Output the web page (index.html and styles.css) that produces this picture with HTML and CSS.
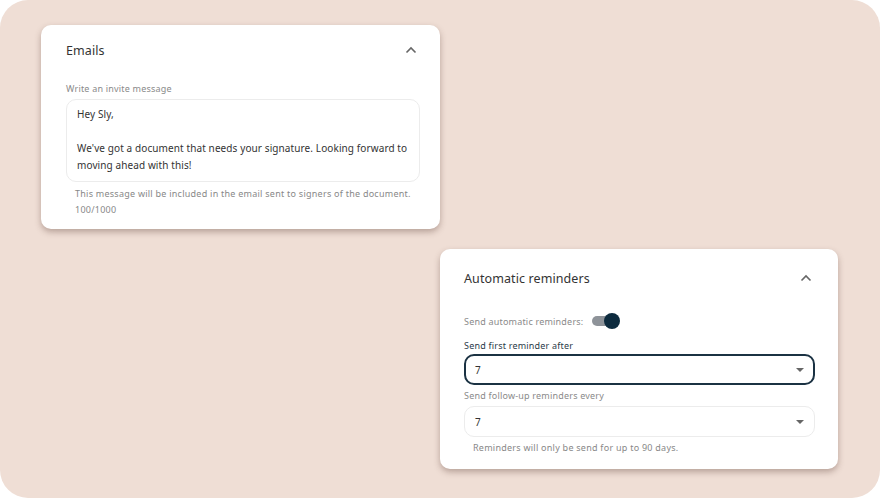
FILE: index.html
```html
<!DOCTYPE html>
<html lang="en">
<head>
    <meta charset="UTF-8">
    <meta name="viewport" content="width=device-width, initial-scale=1.0">
    <title>Signing settings</title>
    <link rel="stylesheet" href="styles.css">
</head>
<body>
    <div class="canvas">
        <div class="row row-top">
            <section class="card card-emails">
                <header class="card-head">
                    <h2>Emails</h2>
                    <svg class="chevron" width="12" height="8" viewBox="0 0 12 8"><path d="M1.5 6.5 L6 2 L10.5 6.5" fill="none" stroke="#666" stroke-width="1.6"/></svg>
                </header>
                <label class="field-label first" for="invite">Write an invite message</label>
                <div class="textarea" id="invite">
                    <p>Hey Sly,</p>
                    <p>&nbsp;</p>
                    <p>We've got a document that needs your signature. Looking forward to moving ahead with this!</p>
                </div>
                <p class="hint">This message will be included in the email sent to signers of the document.</p>
                <p class="hint counter">100/1000</p>
            </section>
        </div>
        <div class="row row-bottom">
            <section class="card card-reminders">
                <header class="card-head">
                    <h2>Automatic reminders</h2>
                    <svg class="chevron" width="12" height="8" viewBox="0 0 12 8"><path d="M1.5 6.5 L6 2 L10.5 6.5" fill="none" stroke="#666" stroke-width="1.6"/></svg>
                </header>
                <div class="toggle-row">
                    <span class="field-label">Send automatic reminders:</span>
                    <span class="toggle"><span class="knob"></span></span>
                </div>
                <div class="field-label strong">Send first reminder after</div>
                <div class="select focused">
                    <span>7</span>
                    <span class="caret"></span>
                </div>
                <div class="field-label follow">Send follow-up reminders every</div>
                <div class="select">
                    <span>7</span>
                    <span class="caret"></span>
                </div>
                <p class="hint">Reminders will only be send for up to 90 days.</p>
            </section>
        </div>
    </div>
</body>
</html>
```

FILE: styles.css
```css
body {
    margin: 0;
    background-color: #fff;
    font-family: "Noto Sans", "DejaVu Sans", sans-serif;
    color: #333;
}

.canvas {
    width: 880px;
    height: 498px;
    background-color: #efded5;
    border-radius: 28px;
    box-sizing: border-box;
    padding: 25px 41px 0 41px;
    display: flex;
    flex-direction: column;
    gap: 20px;
}

.row {
    display: flex;
}

.row-bottom {
    justify-content: flex-end;
    padding-right: 1px;
}

.card {
    background-color: #fff;
    border-radius: 10px;
    box-shadow: 0 3px 6px rgba(80, 50, 40, 0.35);
    box-sizing: border-box;
    width: 399px;
    padding: 0 20px 0 25px;
}

.card-emails {
    height: 204px;
}

.card-reminders {
    width: 398px;
    height: 220px;
    padding-left: 24px;
    padding-right: 23px;
}

.card-head {
    display: flex;
    justify-content: space-between;
    align-items: center;
    height: 50px;
    padding-right: 3px;
}

.card-reminders .card-head {
    height: 58px;
    margin-bottom: 6px;
}

.card-head h2 {
    margin: 0;
    font-size: 12.5px;
    font-weight: 400;
    color: #333;
    letter-spacing: 0.1px;
}

.field-label {
    display: block;
    font-size: 9px;
    letter-spacing: 0.2px;
    color: #8a8a8a;
    margin: 8px 0 4px;
}

.field-label.first {
    margin-top: 7px;
}

.field-label.strong {
    color: #2a3a48;
    margin: 10px 0 2px;
}

.field-label.follow {
    margin: 4px 0 4px;
}

.textarea {
    border: 1px solid #ececec;
    border-radius: 10px;
    padding: 6px 10px 7px;
    font-size: 10px;
    letter-spacing: 0.1px;
    line-height: 17px;
    color: #333;
}

.textarea p {
    margin: 0;
}

.hint {
    margin: 4px 0 0 9px;
    font-size: 9px;
    letter-spacing: 0.25px;
    line-height: 16px;
    color: #888;
}

.hint.counter {
    margin-top: 0;
}

.toggle-row {
    display: flex;
    align-items: center;
    gap: 9px;
    height: 16px;
    margin-bottom: 2px;
}

.toggle-row .field-label {
    margin: 0;
}

.toggle {
    position: relative;
    width: 26px;
    height: 10px;
    border-radius: 5px;
    background-color: #8e9399;
}

.toggle .knob {
    position: absolute;
    right: -2px;
    top: -3px;
    width: 16px;
    height: 16px;
    border-radius: 50%;
    background-color: #0d2b3e;
}

.select {
    display: flex;
    justify-content: space-between;
    align-items: center;
    height: 31px;
    box-sizing: border-box;
    border: 1px solid #ececec;
    border-radius: 10px;
    padding: 0 10px;
    font-size: 10px;
    color: #333;
}

.select.focused {
    border: 2px solid #1b3243;
    padding: 0 9px;
}

.caret {
    width: 0;
    height: 0;
    border-left: 4px solid transparent;
    border-right: 4px solid transparent;
    border-top: 4px solid #666;
}

.card-reminders .hint {
    margin-top: 3px;
}
```
